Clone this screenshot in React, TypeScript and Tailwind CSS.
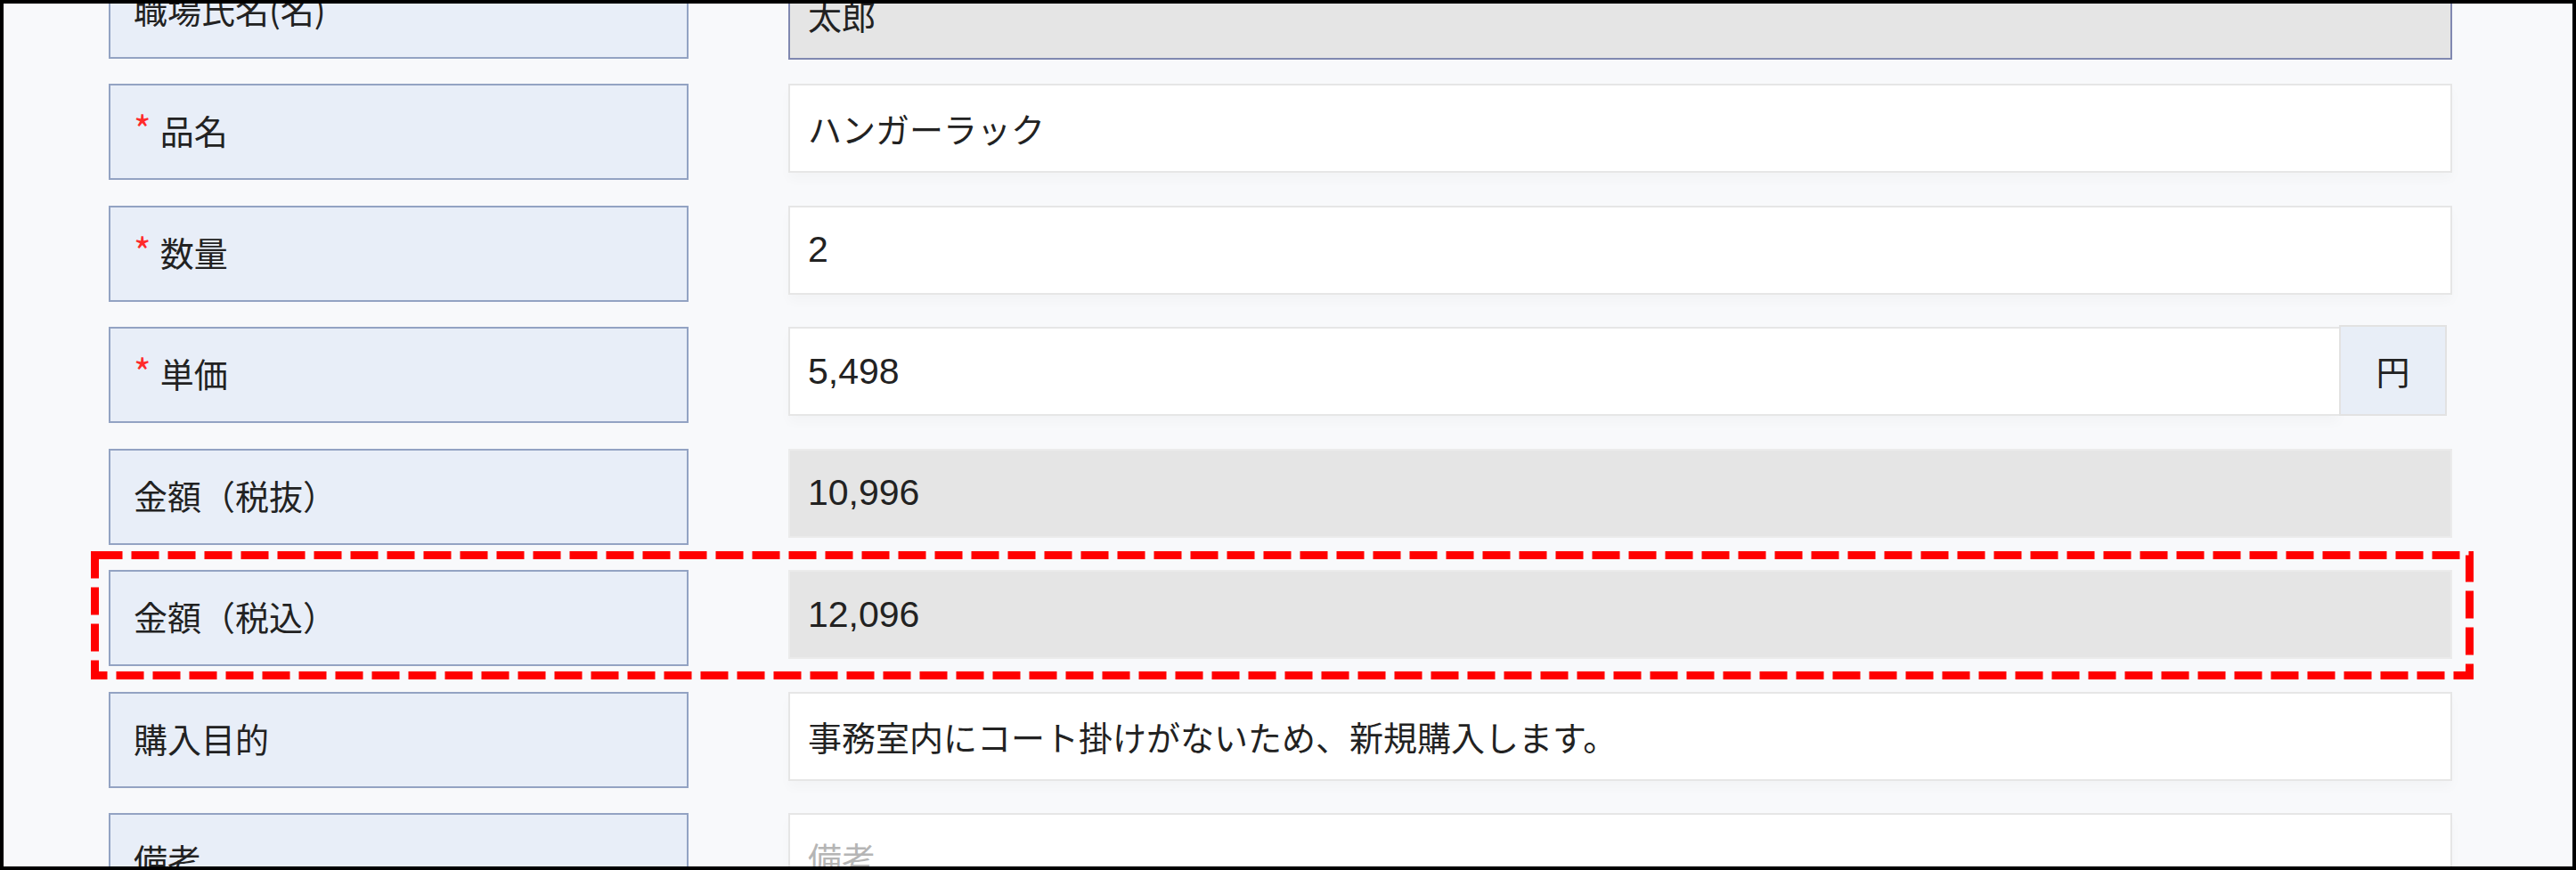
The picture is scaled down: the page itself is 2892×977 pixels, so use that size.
import React from "react";

type Row = {
  label: string;
  required?: boolean;
  value?: string;
  numeric?: boolean;
  placeholder?: string;
  kind: "text" | "readonly" | "focused" | "yen";
};

const rows: Row[] = [
  { label: "職場氏名(名)", value: "太郎", kind: "focused" },
  { label: "品名", required: true, value: "ハンガーラック", kind: "text" },
  { label: "数量", required: true, value: "2", numeric: true, kind: "text" },
  { label: "単価", required: true, value: "5,498", numeric: true, kind: "yen" },
  { label: "金額（税抜）", value: "10,996", numeric: true, kind: "readonly" },
  { label: "金額（税込）", value: "12,096", numeric: true, kind: "readonly" },
  { label: "購入目的", value: "事務室内にコート掛けがないため、新規購入します。", kind: "text" },
  { label: "備考", placeholder: "備考", kind: "text" },
];

function Value({ row }: { row: Row }) {
  if (!row.value) return <span className="text-[#b5b5b5]">{row.placeholder}</span>;
  if (row.numeric)
    return (
      <span className="text-[41px]" style={{ fontFamily: '"Liberation Sans", Arial, sans-serif' }}>
        {row.value}
      </span>
    );
  return <span>{row.value}</span>;
}

function Field({ row }: { row: Row }) {
  if (row.kind === "yen") {
    return (
      <div className="flex flex-1 mr-[6px]">
        <div className="flex-1 h-[100px] bg-white border-2 border-[#e6e6e6] border-r-0 flex items-center pl-[20px] shadow-[0_8px_12px_rgba(0,0,0,0.025)]">
          <Value row={row} />
        </div>
        <div className="w-[121px] h-[102px] -mt-[2px] bg-[#e8eef7] border-2 border-[#e2e2e2] flex items-center justify-center">
          円
        </div>
      </div>
    );
  }
  if (row.kind === "readonly") {
    return (
      <div className="flex-1 h-[100px] bg-[#e5e5e5] border-2 border-[#ebebeb] flex items-center pl-[20px]">
        <Value row={row} />
      </div>
    );
  }
  if (row.kind === "focused") {
    return (
      <div className="flex-1 self-end h-[100px] mb-[-1px] bg-[#e5e5e5] border-2 border-[#8088b0] flex items-center pl-[20px]">
        <Value row={row} />
      </div>
    );
  }
  return (
    <div className="flex-1 h-[100px] bg-white border-2 border-[#e6e6e6] flex items-center pl-[20px] shadow-[0_8px_12px_rgba(0,0,0,0.025)]">
      <Value row={row} />
    </div>
  );
}

export default function App() {
  return (
    <div
      className="relative h-[977px] w-full overflow-hidden border-4 border-black bg-[#f8f9fb] text-[#222] text-[38px] leading-none"
      style={{ fontFamily: '"Noto Sans CJK JP", "Noto Sans", sans-serif' }}
    >
      <div className="flex flex-col gap-[28.5px] -mt-[46.5px] pl-[118px] pr-[135px]">
        {rows.map((row, i) => (
          <div key={i} className="flex items-start h-[108px]">
            <div className="w-[651px] h-[108px] shrink-0 bg-[#e8eef8] border-2 border-[#93a3c3] flex items-center pl-[26px] pb-[4px]">
              {row.required && <span className="text-[#ff2a2a] text-[42px] mr-[10px] -mt-[4px]">*</span>}
              <span>{row.label}</span>
            </div>
            <div className="w-[112px] shrink-0" />
            <Field row={row} />
          </div>
        ))}
      </div>
      <svg
        className="absolute left-[98px] top-[615px] pointer-events-none"
        width="2675"
        height="144"
        viewBox="0 0 2675 144"
      >
        <rect
          x="4.5"
          y="4.5"
          width="2666"
          height="135"
          fill="none"
          stroke="#ff0000"
          strokeWidth="9"
          strokeDasharray="31 10"
        />
      </svg>
    </div>
  );
}
